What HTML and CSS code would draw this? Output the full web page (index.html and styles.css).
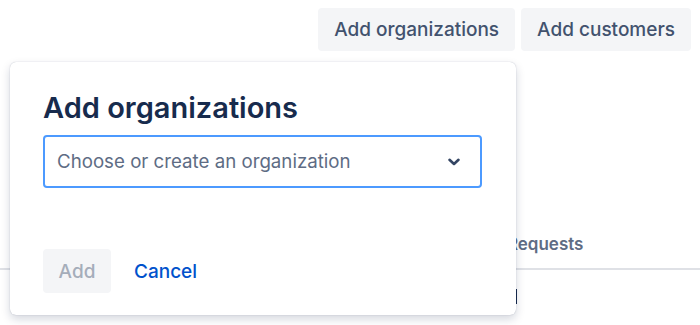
FILE: index.html
```html
<!DOCTYPE html>
<html lang="en">
<head>
    <meta charset="UTF-8">
    <meta name="viewport" content="width=device-width, initial-scale=1.0">
    <title>Add organizations</title>
    <link rel="stylesheet" href="styles.css">
</head>
<body>
    <header class="actions">
        <button class="action-button">Add organizations</button>
        <button class="action-button">Add customers</button>
    </header>

    <nav class="tabs">
        <a href="#" class="tab">Customers</a>
        <a href="#" class="tab">Requests</a>
    </nav>

    <div class="list">
        <span class="list-cell"></span>
    </div>

    <div class="modal">
        <h2 class="modal-title">Add organizations</h2>
        <div class="select">
            <span class="select-placeholder">Choose or create an organization</span>
            <svg class="select-chevron" width="14" height="10" viewBox="0 0 14 10">
                <path d="M2.5 2.8 L7 7 L11.5 2.8" fill="none" stroke="#344563" stroke-width="2.6" stroke-linecap="round" stroke-linejoin="round"/>
            </svg>
        </div>
        <div class="modal-footer">
            <button class="add-button" disabled>Add</button>
            <a href="#" class="cancel-link">Cancel</a>
        </div>
    </div>
</body>
</html>
```

FILE: styles.css
```css
body {
    font-family: 'Inter', 'Noto Sans', sans-serif;
    margin: 0;
    padding: 0;
    background-color: #fff;
    color: #172b4d;
    position: relative;
    height: 325px;
    overflow: hidden;
}

.actions {
    display: flex;
    justify-content: flex-end;
    gap: 6px;
    padding: 8px 9px 0 0;
}

.action-button {
    font-family: inherit;
    font-size: 19px;
    font-weight: 500;
    color: #42526e;
    background-color: #f4f5f7;
    border: none;
    border-radius: 4px;
    height: 43px;
    padding: 0 16px;
}

.tabs {
    display: flex;
    gap: 30px;
    margin-top: 181px;
    padding-left: 387px;
    border-bottom: 2px solid #dfe1e6;
    height: 36px;
}

.tab {
    font-size: 17px;
    font-weight: 600;
    color: #5e6c84;
    text-decoration: none;
    line-height: 24px;
}

.list {
    padding: 19px 0 0 515px;
}

.list-cell {
    display: block;
    width: 0;
    height: 15px;
    border-left: 2px solid #172b4d;
}

.modal {
    position: absolute;
    top: 62px;
    left: 10px;
    width: 506px;
    height: 253px;
    box-sizing: border-box;
    padding: 28px 34px 22px 33px;
    background-color: #fff;
    border-radius: 6px;
    box-shadow: 0 0 1px rgba(9, 30, 66, 0.31), 0 4px 10px rgba(9, 30, 66, 0.18);
    display: flex;
    flex-direction: column;
}

.modal-title {
    margin: 0;
    font-size: 29px;
    font-weight: 600;
    line-height: 35px;
    color: #172b4d;
}

.select {
    margin-top: 10px;
    height: 53px;
    box-sizing: border-box;
    border: 2px solid #4c9aff;
    border-radius: 4px;
    display: flex;
    align-items: center;
    justify-content: space-between;
    padding: 0 19px 0 12px;
}

.select-placeholder {
    font-size: 18.7px;
    color: #5e6c84;
}

.modal-footer {
    margin-top: auto;
    display: flex;
    align-items: center;
    gap: 23px;
}

.add-button {
    font-family: inherit;
    font-size: 19px;
    font-weight: 500;
    color: #a5adba;
    background-color: #f4f5f7;
    border: none;
    border-radius: 4px;
    height: 44px;
    width: 68px;
}

.cancel-link {
    font-size: 19px;
    font-weight: 500;
    color: #0052cc;
    text-decoration: none;
}
```
